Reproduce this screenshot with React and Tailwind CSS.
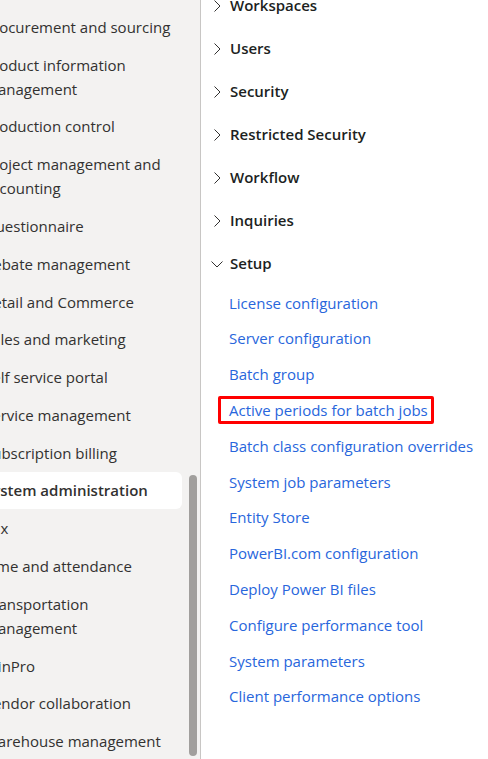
import React from "react";

const leftItems = [
  "Procurement and sourcing",
  "Product information management",
  "Production control",
  "Project management and accounting",
  "Questionnaire",
  "Rebate management",
  "Retail and Commerce",
  "Sales and marketing",
  "Self service portal",
  "Service management",
  "Subscription billing",
  "System administration",
  "Tax",
  "Time and attendance",
  "Transportation management",
  "WinPro",
  "Vendor collaboration",
  "Warehouse management",
];

const groups = ["Workspaces", "Users", "Security", "Restricted Security", "Workflow", "Inquiries"];

const links = [
  "License configuration",
  "Server configuration",
  "Batch group",
  "Active periods for batch jobs",
  "Batch class configuration overrides",
  "System job parameters",
  "Entity Store",
  "PowerBI.com configuration",
  "Deploy Power BI files",
  "Configure performance tool",
  "System parameters",
  "Client performance options",
];

function ChevronRight() {
  return (
    <svg width="12" height="16" viewBox="0 0 12 16" className="shrink-0">
      <path d="M3.5 2.5 L9 8 L3.5 13.5" fill="none" stroke="#323130" strokeWidth="1" />
    </svg>
  );
}

function ChevronDown() {
  return (
    <svg width="14" height="12" viewBox="0 0 14 12" className="shrink-0">
      <path d="M1.5 3.5 L7 9 L12.5 3.5" fill="none" stroke="#323130" strokeWidth="1" />
    </svg>
  );
}

export default function App() {
  return (
    <div
      className="flex h-[759px] w-[488px] overflow-hidden bg-white text-[15px]"
      style={{ fontFamily: '"Segoe UI", "Open Sans", sans-serif' }}
    >
      <div className="flex w-[200px] shrink-0 overflow-hidden bg-[#f3f2f1]">
        <div className="ml-[-16px] w-[198px] shrink-0 pt-[8px]">
          {leftItems.map((t) => {
            const sel = t === "System administration";
            return (
              <div
                key={t}
                className={
                  "py-[6.9px] pl-0 pr-[8px] leading-6 text-[#323130] " +
                  (sel ? "rounded-md bg-white font-semibold text-[#201f1e]" : "")
                }
              >
                {t}
              </div>
            );
          })}
        </div>
        <div className="flex w-[18px] shrink-0 flex-col items-center pl-1">
          <div className="h-[475px] shrink-0" />
          <div className="h-[281px] w-[8px] rounded-full bg-[#a19f9d]" />
        </div>
      </div>
      <div className="w-px shrink-0 bg-[#c8c6c4]" />
      <div className="mt-[-16px] flex-1 pl-[10px]">
        {groups.map((g) => (
          <div key={g} className="flex h-[43px] items-center gap-[7px] font-semibold text-[#201f1e]">
            <ChevronRight />
            <span>{g}</span>
          </div>
        ))}
        <div className="-ml-[1px] flex h-[43px] items-center gap-[6px] font-semibold text-[#201f1e]">
          <ChevronDown />
          <span>Setup</span>
        </div>
        <div className="pl-[18px]">
          {links.map((l) => {
            const hl = l === "Active periods for batch jobs";
            return (
              <div key={l} className="flex h-[35.8px] items-center">
                <span
                  className={
                    "text-[#2866dc] " +
                    (hl ? "-ml-[11px] rounded-[2px] border-[3px] border-[#ff0000] pl-[8px] pr-[3px] py-[1px] leading-5" : "")
                  }
                >
                  {l}
                </span>
              </div>
            );
          })}
        </div>
      </div>
    </div>
  );
}
